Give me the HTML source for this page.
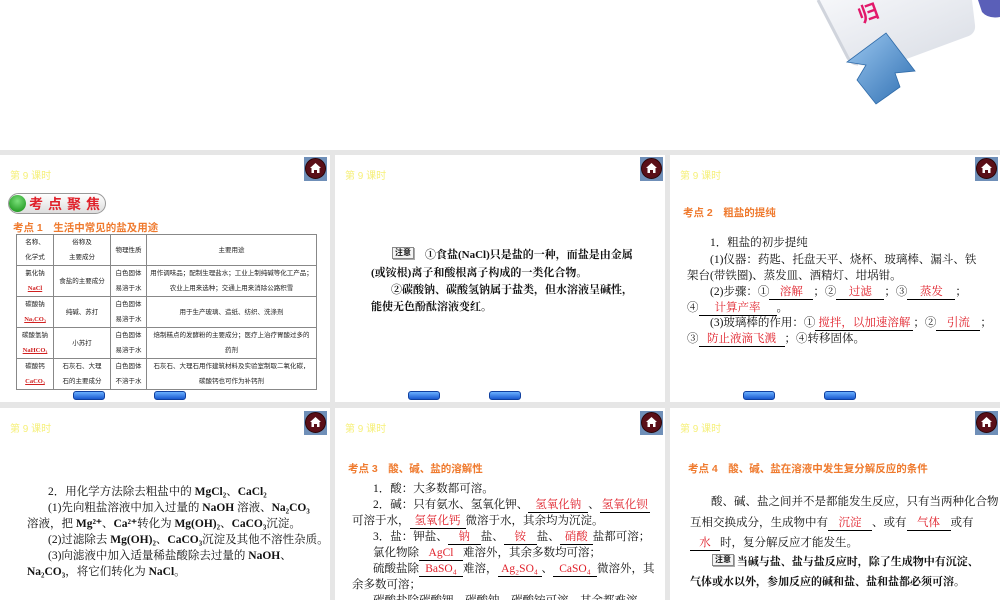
<!DOCTYPE html>
<html><head><meta charset="utf-8"><style>
*{margin:0;padding:0;box-sizing:border-box}
body{width:1000px;height:600px;overflow:hidden;background:#fff;position:relative;font-family:"Liberation Serif","Noto Serif CJK SC",serif;color:#111}
.bg{position:absolute;left:0;top:150px;width:1000px;height:450px;background:#e6e6e6}
.p{position:absolute;background:#fff;overflow:hidden}
.hd{position:absolute;left:10px;top:12px;font:10px "Liberation Sans","Noto Sans CJK SC",sans-serif;color:#f6f07a}
.home{position:absolute;width:23px;height:24px;background:#6f8fb8;top:2px}
.home i{position:absolute;left:1px;top:1px;width:21px;height:21px;border-radius:50%;background:#5a0f18;border:1px solid #2a0508}
.home svg{position:absolute;left:5px;top:5px}
.btn{position:absolute;width:32px;height:9px;border-radius:3px;background:linear-gradient(#6ab0ff,#1a5ad0);border:1px solid #1040a0}
.t{position:absolute;white-space:nowrap;font-size:11.5px;line-height:16px}
.or{position:absolute;white-space:nowrap;font:bold 10.5px "Liberation Sans","Noto Sans CJK SC",sans-serif;color:#ef7a2e}
.r{color:#e0202a;border-bottom:1px solid #000;display:inline-block;text-align:center;line-height:13px}
table{position:absolute;left:16px;top:79px;border-collapse:collapse;font:6.5px "Liberation Sans","Noto Sans CJK SC",sans-serif;color:#222}
td{border:1px solid #888;text-align:center;line-height:15px;padding:0}
.rd{color:#d02020;text-decoration:underline;font-family:"Liberation Serif",serif;font-weight:bold}
.note{display:inline-block;border:1px solid #888;background:#f4f4f4;font-size:8px;line-height:10px;padding:0 2px;box-shadow:1px 1px 0 #aaa;vertical-align:top;font-family:"Liberation Sans","Noto Sans CJK SC",sans-serif}
</style></head><body>
<!-- logo -->
<svg style="position:absolute;left:0;top:0" width="1000" height="150" viewBox="0 0 1000 150">
<defs><linearGradient id="g1" x1="0" y1="0" x2="1" y2="1"><stop offset="0" stop-color="#f6f7fa"/><stop offset="1" stop-color="#d8dce4"/></linearGradient>
<linearGradient id="g2" x1="0" y1="0" x2="1" y2="1"><stop offset="0" stop-color="#9cc8f0"/><stop offset="1" stop-color="#2f6fb2"/></linearGradient></defs>
<path d="M818 0 L972 0 L975 25 Q976 34 966 37 L893 64 Q856 70 848 58 Z" fill="url(#g1)"/>
<path d="M818 0 L848 58 Q852 64 858 64" fill="none" stroke="#d0d4dc" stroke-width="3"/>
<path d="M978 0 L1000 0 L1000 17 Q988 19 982 12 Z" fill="#5a5fb8"/>
<text x="858" y="20" font-size="20" fill="#e2186a" font-family="Noto Sans CJK SC,sans-serif" font-weight="bold" transform="rotate(-20 868 12)">归</text>
<path d="M886 33 L915 71 L895 73 L900 87 L876 104 L857 80 L866 65 L847 62 Z" fill="url(#g2)" stroke="#2e6aa8" stroke-width="0.8"/>
</svg>
<div class="bg"></div>

<!-- panel 1 -->
<div class="p" style="left:0;top:155px;width:330px;height:247px">
<div class="hd">第 9 课时</div>
<div class="home" style="left:304px"><i></i><svg width="13" height="12" viewBox="0 0 13 12"><path d="M6.5 1 L12 6 L10.5 6 L10.5 11 L8 11 L8 8 L5 8 L5 11 L2.5 11 L2.5 6 L1 6 Z" fill="#fff"/></svg></div>
<div style="position:absolute;left:8px;top:38px;width:98px;height:21px;border-radius:11px;border:1px solid #999;background:linear-gradient(#fff,#ddd)"></div>
<div style="position:absolute;left:9px;top:40px;width:17px;height:17px;border-radius:50%;background:radial-gradient(circle at 50% 35%,#7ae07a,#108a10)"></div>
<div style="position:absolute;left:29px;top:39px;font:bold 14px 'Noto Sans CJK SC',sans-serif;color:#e0202a;letter-spacing:5px">考点聚焦</div>
<div class="or" style="left:13px;top:65px">考点 1　生活中常见的盐及用途</div>
<table>
<tr style="height:31px"><td style="width:37px">名称、<br>化学式</td><td style="width:57px">俗称及<br>主要成分</td><td style="width:36px">物理性质</td><td style="width:170px">主要用途</td></tr>
<tr style="height:30px"><td>氯化钠<br><span class="rd">NaCl</span></td><td>食盐的主要成分</td><td>白色固体<br>易溶于水</td><td>用作调味品；配制生理盐水；工业上制纯碱等化工产品；<br>农业上用来选种；交通上用来消除公路积雪</td></tr>
<tr style="height:30px"><td>碳酸钠<br><span class="rd">Na₂CO₃</span></td><td>纯碱、苏打</td><td>白色固体<br>易溶于水</td><td>用于生产玻璃、造纸、纺织、洗涤剂</td></tr>
<tr style="height:30px"><td>碳酸氢钠<br><span class="rd">NaHCO₃</span></td><td>小苏打</td><td>白色固体<br>易溶于水</td><td>焙制糕点的发酵粉的主要成分；医疗上治疗胃酸过多的<br>药剂</td></tr>
<tr style="height:31px"><td>碳酸钙<br><span class="rd">CaCO₃</span></td><td>石灰石、大理<br>石的主要成分</td><td>白色固体<br>不溶于水</td><td>石灰石、大理石用作建筑材料及实验室制取二氧化碳，<br>碳酸钙也可作为补钙剂</td></tr>
</table>
<div class="btn" style="left:73px;top:236px"></div><div class="btn" style="left:154px;top:236px"></div>
</div>

<!-- panel 2 -->
<div class="p" style="left:335px;top:155px;width:330px;height:247px">
<div class="hd">第 9 课时</div>
<div class="home" style="left:305px"><i></i><svg width="13" height="12" viewBox="0 0 13 12"><path d="M6.5 1 L12 6 L10.5 6 L10.5 11 L8 11 L8 8 L5 8 L5 11 L2.5 11 L2.5 6 L1 6 Z" fill="#fff"/></svg></div>
<div class="t" style="left:57px;top:92px;font-weight:bold;font-size:11px"><span class="note">注意</span>　①食盐(NaCl)只是盐的一种，而盐是由金属</div>
<div class="t" style="left:36px;top:110px;font-weight:bold;font-size:11px">(或铵根)离子和酸根离子构成的一类化合物。</div>
<div class="t" style="left:56px;top:127px;font-weight:bold;font-size:11px">②碳酸钠、碳酸氢钠属于盐类，但水溶液呈碱性，</div>
<div class="t" style="left:36px;top:144px;font-weight:bold;font-size:11px">能使无色酚酞溶液变红。</div>
<div class="btn" style="left:73px;top:236px"></div><div class="btn" style="left:154px;top:236px"></div>
</div>

<!-- panel 3 -->
<div class="p" style="left:670px;top:155px;width:330px;height:247px">
<div class="hd">第 9 课时</div>
<div class="home" style="left:305px"><i></i><svg width="13" height="12" viewBox="0 0 13 12"><path d="M6.5 1 L12 6 L10.5 6 L10.5 11 L8 11 L8 8 L5 8 L5 11 L2.5 11 L2.5 6 L1 6 Z" fill="#fff"/></svg></div>
<div class="or" style="left:13px;top:50px">考点 2　粗盐的提纯</div>
<div class="t" style="left:40px;top:80px">1．粗盐的初步提纯</div>
<div class="t" style="left:40px;top:97px">(1)仪器：药匙、托盘天平、烧杯、玻璃棒、漏斗、铁</div>
<div class="t" style="left:17px;top:113px">架台(带铁圈)、蒸发皿、酒精灯、坩埚钳。</div>
<div class="t" style="left:40px;top:129px">(2)步骤：①<span class="r" style="width:44px">溶解</span>；②<span class="r" style="width:48px">过滤</span>；③<span class="r" style="width:48px">蒸发</span>；</div>
<div class="t" style="left:17px;top:145px">④<span class="r" style="width:78px">计算产率</span>。</div>
<div class="t" style="left:40px;top:160px">(3)玻璃棒的作用：①<span class="r" style="width:98px">搅拌，以加速溶解</span>；②<span class="r" style="width:44px">引流</span>；</div>
<div class="t" style="left:17px;top:176px">③<span class="r" style="width:86px">防止液滴飞溅</span>；④转移固体。</div>
<div class="btn" style="left:73px;top:236px"></div><div class="btn" style="left:154px;top:236px"></div>
</div>

<!-- row 2 panel 1 -->
<div class="p" style="left:0;top:408px;width:330px;height:192px">
<div class="hd">第 9 课时</div>
<div class="home" style="left:304px;top:3px"><i></i><svg width="13" height="12" viewBox="0 0 13 12"><path d="M6.5 1 L12 6 L10.5 6 L10.5 11 L8 11 L8 8 L5 8 L5 11 L2.5 11 L2.5 6 L1 6 Z" fill="#fff"/></svg></div>
<div class="t" style="left:48px;top:76px">2．用化学方法除去粗盐中的 <b>MgCl₂</b>、<b>CaCl₂</b></div>
<div class="t" style="left:48px;top:92px">(1)先向粗盐溶液中加入过量的 <b>NaOH</b> 溶液、<b>Na₂CO₃</b></div>
<div class="t" style="left:27px;top:108px">溶液，把 <b>Mg²⁺</b>、<b>Ca²⁺</b>转化为 <b>Mg(OH)₂</b>、<b>CaCO₃</b>沉淀。</div>
<div class="t" style="left:48px;top:124px">(2)过滤除去 <b>Mg(OH)₂</b>、<b>CaCO₃</b>沉淀及其他不溶性杂质。</div>
<div class="t" style="left:48px;top:140px">(3)向滤液中加入适量稀盐酸除去过量的 <b>NaOH</b>、</div>
<div class="t" style="left:27px;top:156px"><b>Na₂CO₃</b>，将它们转化为 <b>NaCl</b>。</div>
</div>

<!-- row 2 panel 2 -->
<div class="p" style="left:335px;top:408px;width:330px;height:192px">
<div class="hd">第 9 课时</div>
<div class="home" style="left:305px;top:3px"><i></i><svg width="13" height="12" viewBox="0 0 13 12"><path d="M6.5 1 L12 6 L10.5 6 L10.5 11 L8 11 L8 8 L5 8 L5 11 L2.5 11 L2.5 6 L1 6 Z" fill="#fff"/></svg></div>
<div class="or" style="left:13px;top:53px">考点 3　酸、碱、盐的溶解性</div>
<div class="t" style="left:38px;top:73px">1．酸：大多数都可溶。</div>
<div class="t" style="left:38px;top:89px">2．碱：只有氨水、氢氧化钾、<span class="r" style="width:60px">氢氧化钠</span>、<span class="r" style="width:50px">氢氧化钡</span></div>
<div class="t" style="left:17px;top:105px">可溶于水，<span class="r" style="width:56px">氢氧化钙</span>微溶于水，其余均为沉淀。</div>
<div class="t" style="left:38px;top:121px">3．盐：钾盐、<span class="r" style="width:33px">钠</span>盐、<span class="r" style="width:33px">铵</span>盐、<span class="r" style="width:33px">硝酸</span>盐都可溶；</div>
<div class="t" style="left:38px;top:137px">氯化物除<span class="r" style="width:44px">AgCl</span>难溶外，其余多数均可溶；</div>
<div class="t" style="left:38px;top:153px">硫酸盐除<span class="r" style="width:44px">BaSO₄</span>难溶，<span class="r" style="width:44px">Ag₂SO₄</span>、<span class="r" style="width:44px">CaSO₄</span>微溶外，其</div>
<div class="t" style="left:17px;top:169px">余多数可溶；</div>
<div class="t" style="left:38px;top:185px">碳酸盐除碳酸钾、碳酸钠、碳酸铵可溶，其余都难溶。</div>
</div>

<!-- row 2 panel 3 -->
<div class="p" style="left:670px;top:408px;width:330px;height:192px">
<div class="hd">第 9 课时</div>
<div class="home" style="left:305px;top:3px"><i></i><svg width="13" height="12" viewBox="0 0 13 12"><path d="M6.5 1 L12 6 L10.5 6 L10.5 11 L8 11 L8 8 L5 8 L5 11 L2.5 11 L2.5 6 L1 6 Z" fill="#fff"/></svg></div>
<div class="or" style="left:18px;top:53px">考点 4　酸、碱、盐在溶液中发生复分解反应的条件</div>
<div class="t" style="left:41px;top:86px">酸、碱、盐之间并不是都能发生反应，只有当两种化合物</div>
<div class="t" style="left:20px;top:107px">互相交换成分，生成物中有<span class="r" style="width:44px">沉淀</span>、或有<span class="r" style="width:44px">气体</span>或有</div>
<div class="t" style="left:20px;top:127px"><span class="r" style="width:30px">水</span>时，复分解反应才能发生。</div>
<div class="t" style="left:42px;top:146px;font-size:11px;font-weight:bold"><span class="note">注意</span> 当碱与盐、盐与盐反应时，除了生成物中有沉淀、</div>
<div class="t" style="left:20px;top:166px;font-size:11px;font-weight:bold">气体或水以外，参加反应的碱和盐、盐和盐都必须可溶。</div>
</div>
</body></html>
